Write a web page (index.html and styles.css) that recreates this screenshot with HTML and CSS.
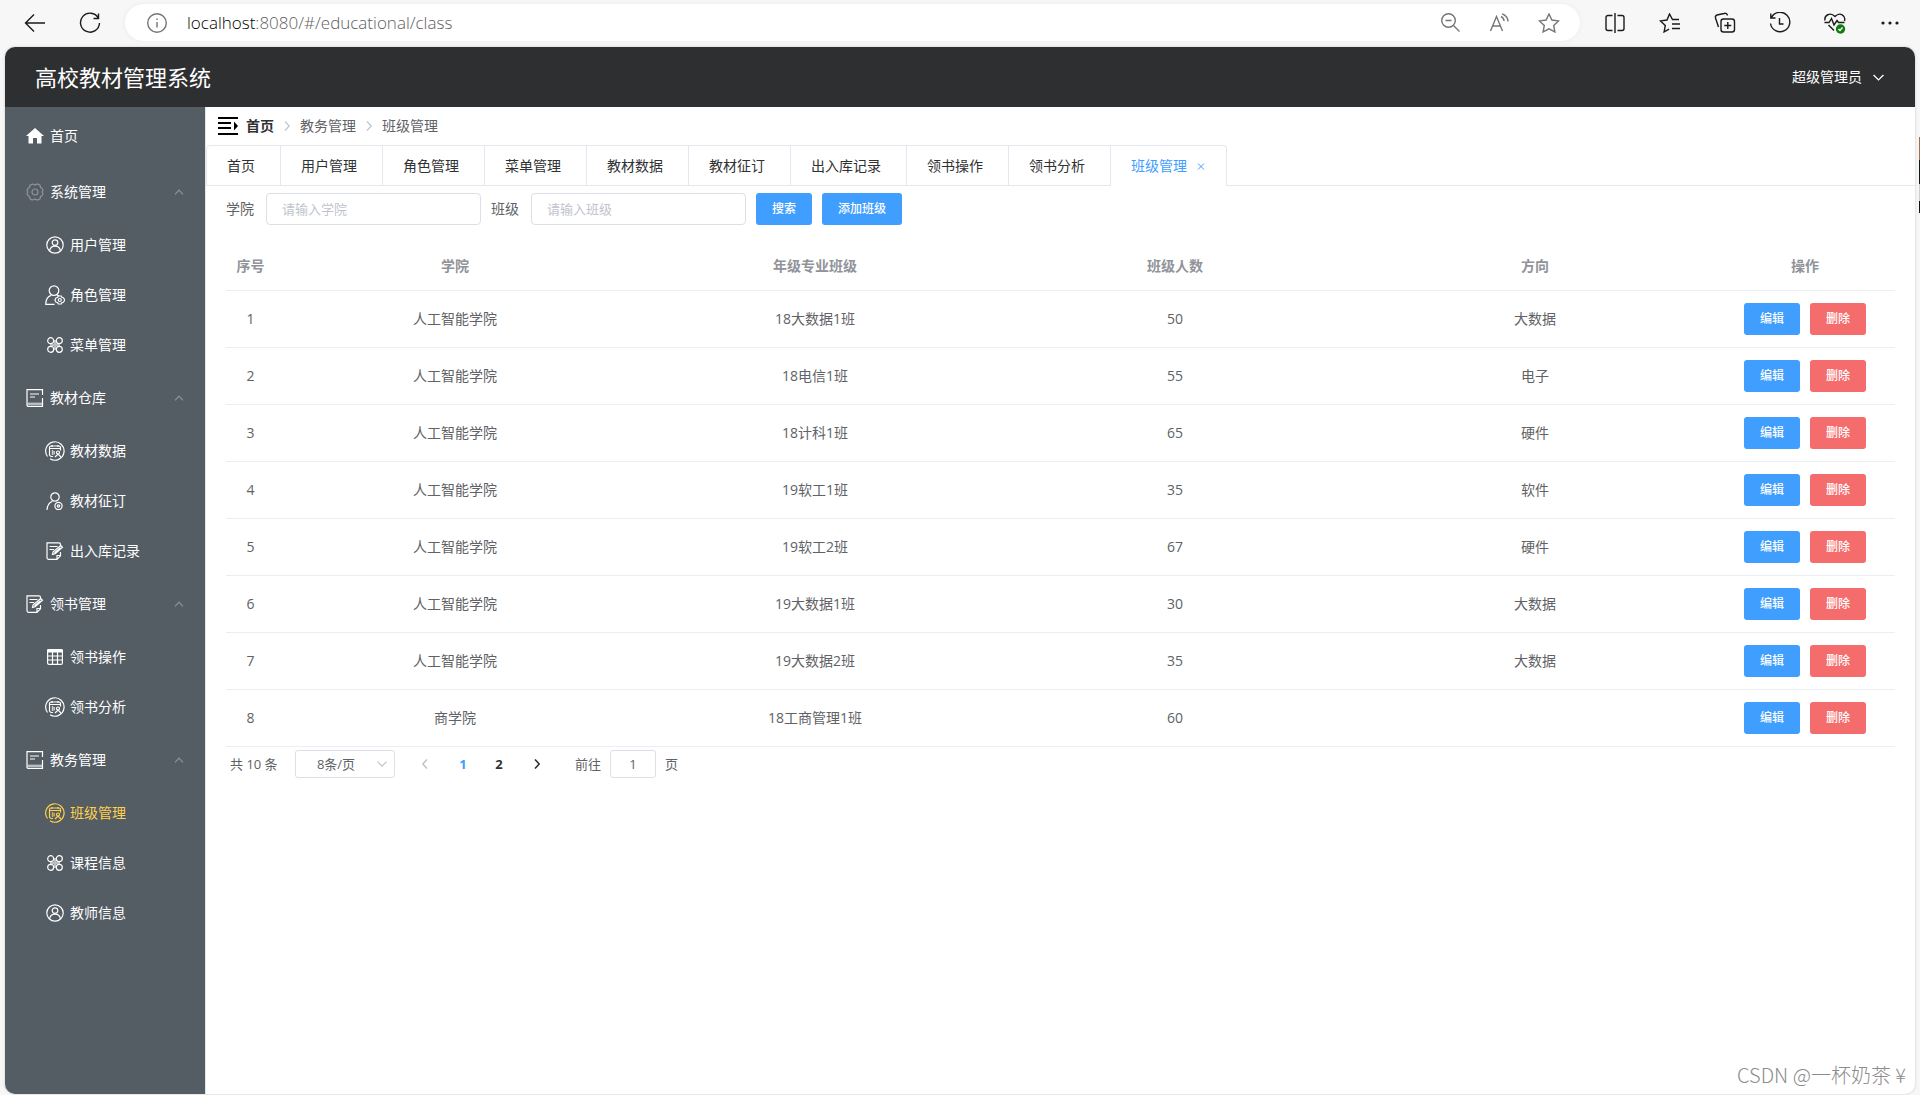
FILE: index.html
```html
<!DOCTYPE html>
<html lang="zh-CN">
<head>
<meta charset="utf-8">
<title>高校教材管理系统</title>
<link rel="stylesheet" href="styles.css">
</head>
<body>
<svg class="sprite" aria-hidden="true">
  <symbol id="i-user" viewBox="0 0 18 18"><circle cx="9" cy="9" r="8.2"/><circle cx="9" cy="6.6" r="2.8"/><path d="M3.6 14.8c.6-3.2 2.6-4.6 5.4-4.6s4.8 1.4 5.4 4.6"/></symbol>
  <symbol id="i-role" viewBox="0 0 20 20"><circle cx="9" cy="5.6" r="4.8"/><path d="M9.5 19.3H.8c0-5 2-8 5.4-9M12 10.200c.8.200 1.500.5 2 .9"/><circle cx="14.800" cy="15" r="1.500"/><path d="M13.300 11h3l.7 1.500 1.500.2 1.200 2.300-1.200 2.300-1.500.2-.7 1.500h-3l-.7-1.500-1.500-.2L9.900 15l1.200-2.300 1.500-.2z"/></symbol>
  <symbol id="i-menu" viewBox="0 0 16 16"><circle cx="3.700" cy="3.700" r="3"/><circle cx="12.300" cy="3.700" r="3"/><circle cx="3.700" cy="12.300" r="3"/><circle cx="12.300" cy="12.300" r="3"/><path d="M3 8h10M8 3v10" stroke-width="2.400" opacity=".6"/></symbol>
  <symbol id="i-book" viewBox="0 0 18 18"><path d="M16.500 9V17.400H2.500a1.500 1.500 0 0 1-1.500-1.500V.6H16.500V6M4 5h9M4 8h5"/><path d="M1.500 14.800h15" stroke-width="2.400" opacity=".6"/></symbol>
  <symbol id="i-data" viewBox="0 0 20 20"><path d="M2.500 15.500A9.200 9.200 0 1 1 5 17.800"/><path d="M8 15.500H6.500a2 2 0 0 1-2-2V6.500a1.500 1.500 0 0 1 1.500-1.500h8a1.500 1.500 0 0 1 1.500 1.500v3M4.500 7.500h11M7 4v2M13 4v2"/><path d="M7.500 9v5M9.200 10v3.500" stroke-width="1.400" opacity=".7"/><circle cx="13" cy="11.500" r="1.500"/><path d="M10 16l3-3 3 3"/></symbol>
  <symbol id="i-order" viewBox="0 0 18 18"><circle cx="9" cy="5" r="4.200"/><path d="M1 18c.2-4.500 2-7.500 5.500-8.800"/><circle cx="12.500" cy="14" r="3.600"/><circle cx="12.500" cy="14" r="1.200"/></symbol>
  <symbol id="i-edit" viewBox="0 0 18 18"><path d="M14.500 4V2.300A1.500 1.500 0 0 0 13 .8H1v15a1.500 1.500 0 0 0 1.500 1.500H11l3.500-3.500V10M3.500 4.500h8M3.500 7.500h4.500M11 17v-3.500h3.500"/><path d="M6.500 12.500l.6-2.700 7.600-6.300 1.800 1.800-7.300 6.400zM8.500 10.800l6-5"/></symbol>
  <symbol id="i-table" viewBox="0 0 16 16"><rect x=".6" y=".6" width="14.800" height="14.800" rx="1.500"/><path d="M0 2h16" stroke-width="3"/><path d="M1 7h14M1 11h14M5.500 3v12M10.500 3v12"/></symbol>
  <symbol id="i-up" viewBox="0 0 10 6"><path d="M1 5.300l4-4.200 4 4.200"/></symbol>
  <symbol id="i-down" viewBox="0 0 10 6"><path d="M.5.700L5 5.200 9.500.700"/></symbol>
  <symbol id="i-right" viewBox="0 0 6 10"><path d="M1 .500L5.200 5 1 9.500"/></symbol>
</svg>

<div class="browser">
  <button class="nav" aria-label="后退"><svg width="22" height="20" viewBox="0 0 22 20"><path d="M10 1.500L1.500 10l8.500 8.500M1.500 10H21"/></svg></button>
  <button class="nav" aria-label="刷新"><svg width="22" height="22" viewBox="0 0 22 22"><path d="M19.300 6A9.500 9.500 0 1 0 20.500 11M19.500 1.500V6.500H14.500"/></svg></button>
  <div class="address">
    <svg width="20" height="20" viewBox="0 0 20 20"><circle cx="10" cy="10" r="9.300"/><path d="M10 9v5.500M10 5.500v1.500"/></svg>
    <span class="url"><b>localhost</b>:8080/#/educational/class</span>
    <svg width="19" height="19" viewBox="0 0 19 19"><circle cx="7.500" cy="7.500" r="6.800"/><path d="M12.500 12.500l6 6M4.500 7.500h6"/></svg>
    <svg width="20" height="20" viewBox="0 0 20 20"><path d="M1.500 18L7.500 3.500l6 14.500M3.700 13h7.600M12 3.500c2 1 3 2.500 3 4.500M13 .8c3.500 1.200 6 4 6 7.700"/></svg>
    <svg width="22" height="20" viewBox="0 0 22 20"><path d="M11 1l2.900 6 6.600.9-4.800 4.500 1.200 6.500L11 15.800l-5.900 3.100 1.200-6.500L1.500 7.900l6.600-.9z"/></svg>
  </div>
  <button class="tool" aria-label="分屏"><svg width="20" height="20" viewBox="0 0 20 20"><path d="M7.500 2.500H3A2 2 0 0 0 1 4.500v11a2 2 0 0 0 2 2h4.500M12.500 2.500H17a2 2 0 0 1 2 2v11a2 2 0 0 1-2 2h-4.500M10 0v20"/></svg></button>
  <button class="tool" aria-label="收藏夹"><svg width="22" height="20" viewBox="0 0 22 20"><path d="M20 6.500h-6.500L10.500 1 8 7l-6.500.9 4.800 4.500-1.200 6.500 5-2.700M13 11h8M13 15.500h8"/></svg></button>
  <button class="tool" aria-label="集锦"><svg width="22" height="22" viewBox="0 0 22 22"><rect x="7" y="7" width="13.500" height="13" rx="2.500"/><path d="M13.800 10v7M10.300 13.500h7M4.500 15L1.500 6a2.500 2.500 0 0 1 1.500-3L10 1.500a2.500 2.500 0 0 1 3.500 2"/></svg></button>
  <button class="tool" aria-label="历史记录"><svg width="22" height="22" viewBox="0 0 22 22"><path d="M2.500 5.500a9.700 9.700 0 1 1-1 6M1.800 1.500V6H6.500M10.500 6v6h4"/></svg></button>
  <button class="tool" aria-label="浏览器概要"><svg width="22" height="22" viewBox="0 0 22 22"><path d="M1 8.500C0 3.500 6-.5 11 4.500 16-.5 22 3.500 20.500 9M.5 10.500H5L7.500 6.500 10 13l3-4.500 1.500 2H20.500M4.500 13l5.500 5.500"/><circle class="ok" cx="16.500" cy="17" r="4.700"/><path class="tick" d="M14.500 17l1.500 1.500 2.500-3"/></svg></button>
  <button class="tool" aria-label="更多"><svg class="dots" width="18" height="4" viewBox="0 0 18 4"><circle cx="2" cy="2" r="1.600"/><circle cx="9" cy="2" r="1.600"/><circle cx="16" cy="2" r="1.600"/></svg></button>
</div>

<div class="app">
  <header class="header">
    <h1>高校教材管理系统</h1>
    <button class="account">超级管理员 <svg class="ic" width="11" height="7"><use href="#i-down"/></svg></button>
  </header>
  <div class="body">
    <nav class="side">
      <a class="item" href="#"><span class="pic"><svg class="home" width="18" height="16" viewBox="0 0 18 16"><path d="M9 0L0 8h2.500v7.500H7V10h4v5.500h4.500V8H18z"/></svg></span>首页</a>
      <a class="item" href="#"><span class="pic dim"><svg class="ic" width="18" height="18" viewBox="0 0 18 18"><circle cx="9" cy="9" r="3"/><path d="M6.300 1.200h1l1.700.9 1.700-.9h1.500l2 1.200.2 2 1.700 1.100.9 1.700-.9 1.800.9 1.800-.9 1.700-1.700 1.100-.2 2-2 1.200h-1.500L9 15.900l-1.700.9h-1.500l-2-1.200-.2-2-1.700-1.100L1 10.800 1.900 9 1 7.200l.9-1.700 1.700-1.100.2-2z"/></svg></span>系统管理<svg class="ic fold" width="10" height="6"><use href="#i-up"/></svg></a>
      <a class="item sub" href="#"><span class="pic"><svg class="ic" width="18" height="18"><use href="#i-user"/></svg></span>用户管理</a>
      <a class="item sub" href="#"><span class="pic"><svg class="ic" width="20" height="20"><use href="#i-role"/></svg></span>角色管理</a>
      <a class="item sub" href="#"><span class="pic"><svg class="ic" width="16" height="16"><use href="#i-menu"/></svg></span>菜单管理</a>
      <a class="item" href="#"><span class="pic"><svg class="ic" width="18" height="18"><use href="#i-book"/></svg></span>教材仓库<svg class="ic fold" width="10" height="6"><use href="#i-up"/></svg></a>
      <a class="item sub" href="#"><span class="pic"><svg class="ic" width="20" height="20"><use href="#i-data"/></svg></span>教材数据</a>
      <a class="item sub" href="#"><span class="pic"><svg class="ic" width="18" height="18"><use href="#i-order"/></svg></span>教材征订</a>
      <a class="item sub" href="#"><span class="pic"><svg class="ic" width="18" height="18"><use href="#i-edit"/></svg></span>出入库记录</a>
      <a class="item" href="#"><span class="pic"><svg class="ic" width="18" height="18"><use href="#i-edit"/></svg></span>领书管理<svg class="ic fold" width="10" height="6"><use href="#i-up"/></svg></a>
      <a class="item sub" href="#"><span class="pic"><svg class="ic" width="16" height="16"><use href="#i-table"/></svg></span>领书操作</a>
      <a class="item sub" href="#"><span class="pic"><svg class="ic" width="20" height="20"><use href="#i-data"/></svg></span>领书分析</a>
      <a class="item" href="#"><span class="pic"><svg class="ic" width="18" height="18"><use href="#i-book"/></svg></span>教务管理<svg class="ic fold" width="10" height="6"><use href="#i-up"/></svg></a>
      <a class="item sub active" href="#"><span class="pic"><svg class="ic" width="20" height="20"><use href="#i-data"/></svg></span>班级管理</a>
      <a class="item sub" href="#"><span class="pic"><svg class="ic" width="16" height="16"><use href="#i-menu"/></svg></span>课程信息</a>
      <a class="item sub" href="#"><span class="pic"><svg class="ic" width="18" height="18"><use href="#i-user"/></svg></span>教师信息</a>
    </nav>
    <main class="main">
      <div class="crumbs">
        <button class="collapse" aria-label="折叠菜单"><svg width="20" height="18" viewBox="0 0 20 18"><path d="M0 1h20M0 6h13M0 11h13M0 17h20"/><path class="arrow" d="M16 4.500l4 4.500-4 4.500z"/></svg></button>
        <a class="root" href="#">首页</a>
        <svg class="ic sep" width="6" height="10"><use href="#i-right"/></svg>
        <span>教务管理</span>
        <svg class="ic sep" width="6" height="10"><use href="#i-right"/></svg>
        <span>班级管理</span>
      </div>
      <div class="tabs">
        <a href="#">首页</a><a href="#">用户管理</a><a href="#">角色管理</a><a href="#">菜单管理</a><a href="#">教材数据</a><a href="#">教材征订</a><a href="#">出入库记录</a><a href="#">领书操作</a><a href="#">领书分析</a><a class="current" href="#">班级管理<svg class="ic close" width="14" height="14" viewBox="0 0 14 14"><path d="M4 4.500l6 6M10 4.500l-6 6"/></svg></a>
      </div>
      <div class="content">
        <form class="search">
          <label for="college">学院</label>
          <input id="college" type="text" placeholder="请输入学院">
          <label for="clazz">班级</label>
          <input id="clazz" type="text" placeholder="请输入班级">
          <button class="btn" type="button">搜索</button>
          <button class="btn" type="button">添加班级</button>
        </form>
        <table class="list">
          <colgroup><col class="c-no"><col><col><col><col><col class="c-op"></colgroup>
          <thead><tr><th>序号</th><th>学院</th><th>年级专业班级</th><th>班级人数</th><th>方向</th><th>操作</th></tr></thead>
          <tbody>
            <tr><td>1</td><td>人工智能学院</td><td>18大数据1班</td><td>50</td><td>大数据</td><td><div class="ops"><button class="btn">编辑</button><button class="btn danger">删除</button></div></td></tr>
            <tr><td>2</td><td>人工智能学院</td><td>18电信1班</td><td>55</td><td>电子</td><td><div class="ops"><button class="btn">编辑</button><button class="btn danger">删除</button></div></td></tr>
            <tr><td>3</td><td>人工智能学院</td><td>18计科1班</td><td>65</td><td>硬件</td><td><div class="ops"><button class="btn">编辑</button><button class="btn danger">删除</button></div></td></tr>
            <tr><td>4</td><td>人工智能学院</td><td>19软工1班</td><td>35</td><td>软件</td><td><div class="ops"><button class="btn">编辑</button><button class="btn danger">删除</button></div></td></tr>
            <tr><td>5</td><td>人工智能学院</td><td>19软工2班</td><td>67</td><td>硬件</td><td><div class="ops"><button class="btn">编辑</button><button class="btn danger">删除</button></div></td></tr>
            <tr><td>6</td><td>人工智能学院</td><td>19大数据1班</td><td>30</td><td>大数据</td><td><div class="ops"><button class="btn">编辑</button><button class="btn danger">删除</button></div></td></tr>
            <tr><td>7</td><td>人工智能学院</td><td>19大数据2班</td><td>35</td><td>大数据</td><td><div class="ops"><button class="btn">编辑</button><button class="btn danger">删除</button></div></td></tr>
            <tr><td>8</td><td>商学院</td><td>18工商管理1班</td><td>60</td><td></td><td><div class="ops"><button class="btn">编辑</button><button class="btn danger">删除</button></div></td></tr>
          </tbody>
        </table>
        <div class="pager">
          <span class="total">共 10 条</span>
          <span class="size"><select aria-label="每页条数"><option>8条/页</option></select><svg class="ic" width="10" height="6"><use href="#i-down"/></svg></span>
          <button class="pg off" aria-label="上一页"><svg class="ic flip" width="6" height="10"><use href="#i-right"/></svg></button>
          <span class="pages"><button class="pg on">1</button><button class="pg">2</button></span>
          <button class="pg" aria-label="下一页"><svg class="ic" width="6" height="10"><use href="#i-right"/></svg></button>
          <label class="jump">前往 <input type="text" value="1"> 页</label>
        </div>
      </div>
    </main>
  </div>
  <div class="mark">CSDN @一杯奶茶 ¥</div>
</div>
<div class="behind"></div>
</body>
</html>
```
FILE: styles.css
```css
* { box-sizing: border-box; }
body {
  position: relative;
  margin: 0;
  min-height: 100vh;
  display: flex;
  flex-direction: column;
  background: #f7f7f7;
  color: #606266;
  font: 14px/20px "Open Sans", "Noto Sans CJK SC", sans-serif;
}
a { color: inherit; text-decoration: none; }
button, input, select { font: inherit; color: inherit; }
button { border: 0; padding: 0; background: none; }
svg { flex: none; fill: none; stroke: currentColor; }
.ic { stroke-width: 1.2; }
.sprite { position: absolute; width: 0; height: 0; }

/* browser toolbar */
.browser {
  display: flex;
  align-items: center;
  height: 47px;
  padding: 0 19px 2px 24px;
  color: #1b1b1b;
}
.browser svg { display: block; stroke-width: 1.4; }
.nav { width: 22px; margin-right: 33px; }
.nav + .nav { margin-right: 24px; }
.address {
  flex: 1;
  display: flex;
  align-items: center;
  height: 37px;
  padding: 0 20px 0 22px;
  border-radius: 19px;
  background: #fff;
  box-shadow: 0 0 4px #e9e9e9;
  color: #757575;
}
.address svg + svg { margin-left: 29px; }
.url {
  flex: 1;
  margin-left: 20px;
  font-size: 17px;
  line-height: 24px;
  font-weight: 300;
  color: #606060;
}
.url b { font-weight: 300; color: #000; }
.tool { width: 22px; margin-left: 33px; display: flex; justify-content: center; }
.address + .tool { margin-left: 24px; }
.dots { fill: currentColor; stroke: none; }
.ok { fill: #107c10; stroke: none; }
.tick { stroke: #fff; }

/* application frame */
.app {
  position: relative;
  flex: 1;
  display: flex;
  flex-direction: column;
  margin: 0 5px 1px;
  border-radius: 10px;
  overflow: hidden;
  background: #fff;
  box-shadow: 0 0 3px #c8c8c8;
}
.header {
  display: flex;
  align-items: center;
  justify-content: space-between;
  height: 60px;
  padding: 0 31px 0 30px;
  background: #2d2f31;
  color: #fff;
}
.header h1 { margin: 0; font-size: 22px; line-height: 32px; font-weight: 400; }
.account { display: flex; align-items: center; gap: 11px; }
.body { flex: 1; display: flex; }

/* sidebar */
.side {
  flex: none;
  width: 200px;
  padding-top: 1px;
  background: #545c64;
  color: #fff;
}
.item {
  display: flex;
  align-items: center;
  height: 56px;
  padding: 0 21px 0 20px;
}
.item.sub { height: 50px; padding-left: 40px; }
.item.active { color: #ffd04b; }
.pic { width: 20px; margin-right: 5px; display: flex; justify-content: center; }
.pic.dim { color: #909399; }
.home { fill: currentColor; stroke: none; }
.fold { margin-left: auto; color: #909399; }

/* breadcrumb and tabs */
.main { flex: 1; min-width: 0; border-left: 1px solid #e6e6e6; }
.crumbs {
  display: flex;
  align-items: center;
  height: 38px;
  padding-left: 12px;
}
.collapse { margin-right: 8px; color: #000; }
.collapse svg { display: block; stroke-width: 2; }
.arrow { fill: currentColor; stroke: none; }
.root { font-weight: 700; color: #303133; }
.sep { margin: 0 10px; color: #c0c4cc; }
.tabs {
  display: flex;
  height: 41px;
  box-shadow: inset 0 -1px #e4e7ed;
  color: #303133;
}
.tabs a {
  display: flex;
  align-items: center;
  padding: 0 25px 0 20px;
  border: 1px solid #e4e7ed;
  border-left-width: 0;
}
.tabs a:first-child { border-left-width: 1px; border-top-left-radius: 4px; }
.tabs .current {
  padding-right: 18px;
  border-bottom-color: #fff;
  border-top-right-radius: 4px;
  color: #409eff;
}
.close { margin-left: 7px; stroke-width: 1; }

/* search form */
.content { padding: 7px 20px 0; }
.search { display: flex; align-items: center; gap: 10px; }
.search input {
  width: 215px;
  height: 32px;
  margin-left: 2px;
  padding: 0 15px;
  border: 1px solid #dcdfe6;
  border-radius: 4px;
  font-size: 13px;
}
.search input::placeholder { color: #c0c4cc; }
.btn {
  height: 32px;
  padding: 0 16px;
  border-radius: 3px;
  background: #409eff;
  color: #fff;
  font-size: 12px;
  font-weight: 500;
}
.btn.danger { background: #f56c6c; }

/* data table */
.list {
  width: 100%;
  margin-top: 17px;
  border-collapse: collapse;
  table-layout: fixed;
  text-align: center;
}
.c-no { width: 49px; }
.c-op { width: 180px; }
.list th, .list td { padding: 0; border-bottom: 1px solid #ebeef5; }
.list th { height: 48px; color: #909399; }
.list td { height: 57px; }
.ops { display: flex; justify-content: center; gap: 10px; }

/* pagination */
.pager {
  display: flex;
  align-items: center;
  padding: 3px 4px;
  font-size: 13px;
}
.total { width: 65px; }
.size { position: relative; display: flex; margin-right: 12px; }
.size select {
  appearance: none;
  width: 100px;
  height: 28px;
  padding: 0 18px 0 0;
  border: 1px solid #dcdfe6;
  border-radius: 3px;
  background: #fff;
  text-align: center;
  text-align-last: center;
}
.size svg { position: absolute; right: 8px; top: 11px; color: #c0c4cc; }
.pages { display: flex; margin: 0 2px; }
.pg { width: 36px; height: 28px; font-weight: 700; color: #303133; }
.pg.on { color: #409eff; }
.pg.off { color: #c0c4cc; }
.pg svg { stroke-width: 1.6; }
.flip { transform: rotate(180deg); }
.jump { display: flex; align-items: center; gap: 9px; margin-left: 20px; }
.jump input {
  width: 46px;
  height: 28px;
  padding: 0;
  border: 1px solid #dcdfe6;
  border-radius: 3px;
  text-align: center;
}

.mark {
  position: absolute;
  right: 9px;
  bottom: 6px;
  font: 300 20px/26px "Noto Sans CJK SC", sans-serif;
  color: #8c8c8c;
}

/* edge of the window behind */
.behind {
  position: absolute;
  right: 0;
  top: 137px;
  width: 1px;
  height: 76px;
  background: linear-gradient(#a86a4c 30%, #0c1a1c 30% 62%, #c9ccd0 62% 84%, #101418 84%);
}
```
